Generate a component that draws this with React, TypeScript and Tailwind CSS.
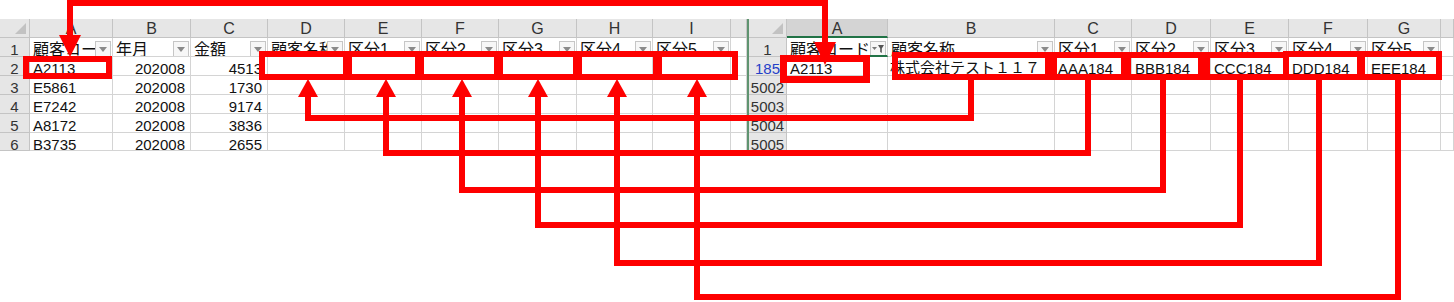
import React from "react";

const FONT = "font-['Liberation_Sans','Noto_Sans_CJK_JP',sans-serif]";

function DropBtn({ filtered }: { filtered?: boolean }) {
  return (
    <span className="absolute right-[1px] top-[3px] w-[16px] h-[16px] border border-[#c6c6c6] bg-[#f7f7f7] flex items-center justify-center">
      {filtered ? (
        <svg width="14" height="10" viewBox="0 0 14 10">
          <path d="M1 3h5L3.5 6z" fill="#7a7a7a" />
          <path d="M7 1h6L10.8 4.5V9L9.2 8V4.5z" fill="#555" />
        </svg>
      ) : (
        <svg width="8" height="5" viewBox="0 0 8 5">
          <path d="M0 0h8L4 5z" fill="#8a8a8a" />
        </svg>
      )}
    </span>
  );
}

function Corner() {
  return (
    <div className="relative bg-[#e6e6e6] border-r border-b border-[#c4c4c4]">
      <svg className="absolute right-[3px] bottom-[3px]" width="11" height="11" viewBox="0 0 11 11">
        <path d="M11 0V11H0z" fill="#c2c2c2" />
      </svg>
    </div>
  );
}

function ColHead({ label, active }: { label: string; active?: boolean }) {
  return (
    <div
      className={`text-center text-[16px] leading-[19px] text-[#333] border-r border-[#c4c4c4] ${
        active ? "bg-[#d4d4d4] border-b-2 border-b-[#217346]" : "bg-[#e6e6e6] border-b"
      }`}
    >
      {label}
    </div>
  );
}

function RowHead({ label, blue }: { label: string; blue?: boolean }) {
  return (
    <div
      className={`bg-[#e6e6e6] border-r border-b border-[#c4c4c4] text-center text-[15px] leading-[19px] pt-[2px] overflow-hidden ${
        blue ? "text-[#2440c8]" : "text-[#333]"
      }`}
    >
      {label}
    </div>
  );
}

function HeadCell({ text, filtered, green }: { text: string; filtered?: boolean; green?: boolean }) {
  return (
    <div
      className={`relative overflow-hidden border-r border-[#d4d4d4] pl-[3px] pt-[2px] text-[16px] leading-[19px] text-[#111] whitespace-nowrap ${
        green ? "border-b-2 border-b-[#217346]" : "border-b"
      }`}
    >
      {text}
      <DropBtn filtered={filtered} />
    </div>
  );
}

function Cell({ text, right }: { text?: string; right?: boolean }) {
  return (
    <div
      className={`overflow-hidden whitespace-nowrap border-r border-b border-[#d4d4d4] text-[15px] leading-[19px] pt-[2px] text-[#111] ${
        right ? "text-right pr-[5px]" : "pl-[3px]"
      }`}
    >
      {text}
    </div>
  );
}

const leftRows = [
  ["2", "A2113", "202008", "4513"],
  ["3", "E5861", "202008", "1730"],
  ["4", "E7242", "202008", "9174"],
  ["5", "A8172", "202008", "3836"],
  ["6", "B3735", "202008", "2655"],
];

const rightRows = [
  ["185", "A2113", "株式会社テスト１１７", "AAA184", "BBB184", "CCC184", "DDD184", "EEE184"],
  ["5002"],
  ["5003"],
  ["5004"],
  ["5005"],
];

function LeftSheet() {
  const letters = ["A", "B", "C", "D", "E", "F", "G", "H", "I"];
  const heads = ["顧客コード", "年月", "金額", "顧客名称", "区分1", "区分2", "区分3", "区分4", "区分5"];
  return (
    <div className="grid grid-cols-[30px_83px_78px_77px_77px_77px_77px_78px_76px_78px_16px] grid-rows-[19px_19px_19px_19px_19px_19px_18px] overflow-hidden">
      <Corner />
      {letters.map((l) => (
        <ColHead key={l} label={l} />
      ))}
      <ColHead label="" />

      <RowHead label="1" />
      {heads.map((h) => (
        <HeadCell key={h} text={h} />
      ))}
      <Cell />

      {leftRows.map((r) => (
        <React.Fragment key={r[0]}>
          <RowHead label={r[0]} />
          <Cell text={r[1]} />
          <Cell text={r[2]} right />
          <Cell text={r[3]} right />
          {[0, 1, 2, 3, 4, 5, 6].map((i) => (
            <Cell key={i} />
          ))}
        </React.Fragment>
      ))}
    </div>
  );
}

function RightSheet() {
  const letters = ["A", "B", "C", "D", "E", "F", "G"];
  const heads = ["顧客コード", "顧客名称", "区分1", "区分2", "区分3", "区分4", "区分5"];
  return (
    <div className="border-l-2 border-[#5f9470] grid grid-cols-[38px_101px_167px_77px_79px_78px_79px_73px_13px] grid-rows-[19px_19px_19px_19px_19px_19px_18px] overflow-hidden">
      <Corner />
      {letters.map((l, i) => (
        <ColHead key={l} label={l} active={i === 0} />
      ))}
      <ColHead label="" />

      <RowHead label="1" />
      {heads.map((h, i) => (
        <HeadCell key={h} text={h} filtered={i === 0} green={i === 0} />
      ))}
      <Cell />

      {rightRows.map((r, ri) => (
        <React.Fragment key={r[0]}>
          <RowHead label={r[0]} blue={ri === 0} />
          {[1, 2, 3, 4, 5, 6, 7].map((i) =>
            i === 2 && r[i] ? (
              <div
                key={i}
                className="overflow-hidden whitespace-nowrap border-r border-b border-[#d4d4d4] text-[15px] leading-[19px] pt-[1px] pl-[2px] text-[#111]"
              >
                {r[i]}
              </div>
            ) : (
              <Cell key={i} text={r[i]} />
            )
          )}
          <Cell />
        </React.Fragment>
      ))}
    </div>
  );
}

// outer edges [x1, y1, x2, y2, stroke]
const boxes: [number, number, number, number, number][] = [
  [23, 56, 112, 79, 6],
  [259, 51, 349, 80, 6],
  [346, 51, 421, 80, 6],
  [418, 51, 500, 80, 6],
  [497, 51, 579, 80, 6],
  [576, 51, 659, 80, 6],
  [656, 51, 738, 80, 6],
  [780, 55, 870, 83, 7],
  [892, 52, 1051, 80, 6],
  [1051, 52, 1127, 80, 6],
  [1125, 52, 1204, 80, 6],
  [1204, 52, 1289, 80, 6],
  [1283, 51, 1363, 80, 6],
  [1359, 51, 1442, 80, 6],
];

// [right x, horizontal y, left x]
const links = [
  [971, 118, 308],
  [1088, 153, 386],
  [1163, 190, 462],
  [1240, 225, 538],
  [1319, 263, 617],
  [1398, 297, 697],
];

function Overlay() {
  const red = "#fe0000";
  return (
    <svg className="absolute inset-0 pointer-events-none" width="1454" height="302" viewBox="0 0 1454 302">
      {boxes.map(([x1, y1, x2, y2, s], i) => (
        <rect
          key={i}
          x={x1 + s / 2}
          y={y1 + s / 2}
          width={x2 - x1 - s}
          height={y2 - y1 - s}
          fill="none"
          stroke={red}
          strokeWidth={s}
        />
      ))}
      <path d="M70 38V3H825V45" fill="none" stroke={red} strokeWidth="6" />
      <polygon points="59,35 81,35 70,57" fill={red} />
      <polygon points="814,42 836,42 825,65" fill={red} />
      {links.map(([rx, y, lx], i) => (
        <g key={i}>
          <path d={`M${rx} 80V${y}H${lx}V95`} fill="none" stroke={red} strokeWidth="6" />
          <polygon points={`${lx - 10},97 ${lx + 10},97 ${lx},79`} fill={red} />
        </g>
      ))}
    </svg>
  );
}

export default function App() {
  return (
    <div className={`relative w-[1454px] h-[302px] bg-white overflow-hidden ${FONT}`}>
      <div className="pt-[19px] flex">
        <LeftSheet />
        <RightSheet />
      </div>
      <Overlay />
    </div>
  );
}
